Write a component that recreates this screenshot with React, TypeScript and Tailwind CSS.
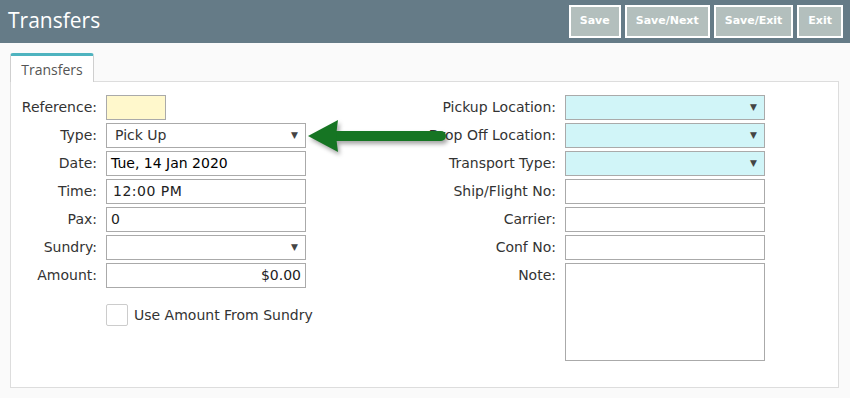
import React from 'react';

const inputBase =
  "h-[25px] w-[200px] border border-[#aaaaaa] text-[14px] text-[#222] flex items-center";

const Caret = () => <span className="ml-auto mr-[7px] text-[9px] leading-none text-[#444]">▼</span>;

const Row: React.FC<{ label: string; labelWidth: string; children: React.ReactNode }> = ({ label, labelWidth, children }) => (
  <div className="flex items-start gap-[9px]">
    <div className={`${labelWidth} text-right text-[14px] leading-[25px] text-[#333] whitespace-nowrap`}>{label}</div>
    {children}
  </div>
);

const SelectBox: React.FC<{ value?: string; tone?: string }> = ({ value, tone = 'bg-white' }) => (
  <div className={`${inputBase} ${tone}`}>
    {value && <span className="pl-[8px] text-[#333]">{value}</span>}
    <Caret />
  </div>
);

const TextBox: React.FC<{ value?: string; right?: boolean; className?: string }> = ({ value, right, className = '' }) => (
  <div className={`${inputBase} bg-white ${right ? 'justify-end pr-[4px]' : 'pl-[4px]'} ${className}`}>{value}</div>
);

const ARROW_GREEN = '#167523';

export default function App() {
  const headerButtons = ['Save', 'Save/Next', 'Save/Exit', 'Exit'];

  return (
    <div className="relative w-[850px] h-[398px] bg-[#fafafa] font-['DejaVu_Sans',Verdana,sans-serif] overflow-hidden">
      {/* Header */}
      <div className="h-[43px] bg-[#657b87] flex items-center pl-[8px] pr-[7px]">
        <h1 className="font-['Open_Sans',sans-serif] text-[21px] text-white leading-none -mt-[2px]">Transfers</h1>
        <div className="ml-auto flex gap-[4px] -mt-[1px]">
          {headerButtons.map((b) => (
            <button
              key={b}
              className="h-[33px] px-[9px] border-2 border-white bg-[#b3bfbd] text-white text-[11px] font-bold"
            >
              {b}
            </button>
          ))}
        </div>
      </div>

      {/* Body */}
      <div className="pt-[10px] pl-[10px] pr-[11px]">
        <div className="flex">
          <div className="h-[29px] w-[84px] bg-white border-t-[3px] border-x border-t-[#4eb3bf] border-x-[#cfcfcf] rounded-t-[3px] font-['Open_Sans',sans-serif] text-[14px] text-[#555] flex items-center justify-center -mb-px relative z-10">
            Transfers
          </div>
        </div>
        <div className="h-[307px] bg-white border border-[#dddddd] pt-[13px] flex">
          {/* Left column */}
          <div className="w-[295px] flex flex-col gap-[3px]">
            <Row label="Reference:" labelWidth="w-[86px]">
              <div className="h-[25px] w-[60px] border border-[#aaaaaa] bg-[#fff8cc]" />
            </Row>
            <Row label="Type:" labelWidth="w-[86px]">
              <SelectBox value="Pick Up" />
            </Row>
            <Row label="Date:" labelWidth="w-[86px]">
              <TextBox value="Tue, 14 Jan 2020" className="text-black" />
            </Row>
            <Row label="Time:" labelWidth="w-[86px]">
              <TextBox value="12:00 PM" className="pl-[6px] tracking-[0.5px]" />
            </Row>
            <Row label="Pax:" labelWidth="w-[86px]">
              <TextBox value="0" />
            </Row>
            <Row label="Sundry:" labelWidth="w-[86px]">
              <SelectBox />
            </Row>
            <Row label="Amount:" labelWidth="w-[86px]">
              <TextBox value="$0.00" right />
            </Row>
            <div className="flex items-center gap-[6px] ml-[95px] mt-[13px] whitespace-nowrap">
              <div className="w-[22px] h-[22px] border border-[#cccccc] rounded-[2px] bg-white shrink-0" />
              <span className="text-[14px] text-[#333]">Use Amount From Sundry</span>
            </div>
          </div>

          {/* Right column */}
          <div className="ml-[14px] flex flex-col gap-[3px]">
            <Row label="Pickup Location:" labelWidth="w-[236px]">
              <SelectBox tone="bg-[#d1f5f8]" />
            </Row>
            <Row label="Drop Off Location:" labelWidth="w-[236px]">
              <SelectBox tone="bg-[#d1f5f8]" />
            </Row>
            <Row label="Transport Type:" labelWidth="w-[236px]">
              <SelectBox tone="bg-[#d1f5f8]" />
            </Row>
            <Row label="Ship/Flight No:" labelWidth="w-[236px]">
              <TextBox />
            </Row>
            <Row label="Carrier:" labelWidth="w-[236px]">
              <TextBox />
            </Row>
            <Row label="Conf No:" labelWidth="w-[236px]">
              <TextBox />
            </Row>
            <Row label="Note:" labelWidth="w-[236px]">
              <div className="h-[98px] w-[200px] border border-[#aaaaaa] bg-white" />
            </Row>
          </div>
        </div>
      </div>

      {/* Callout arrow */}
      <svg
        className="absolute left-[300px] top-[112px] drop-shadow-[2px_3px_2px_rgba(0,0,0,0.35)]"
        width="160"
        height="50"
        viewBox="0 0 160 50"
      >
        <line x1="36" y1="24" x2="141" y2="24" stroke={ARROW_GREEN} strokeWidth="10" strokeLinecap="round" />
        <polygon points="8,24 38,8 36,24 38,40" fill={ARROW_GREEN} />
      </svg>
    </div>
  );
}
